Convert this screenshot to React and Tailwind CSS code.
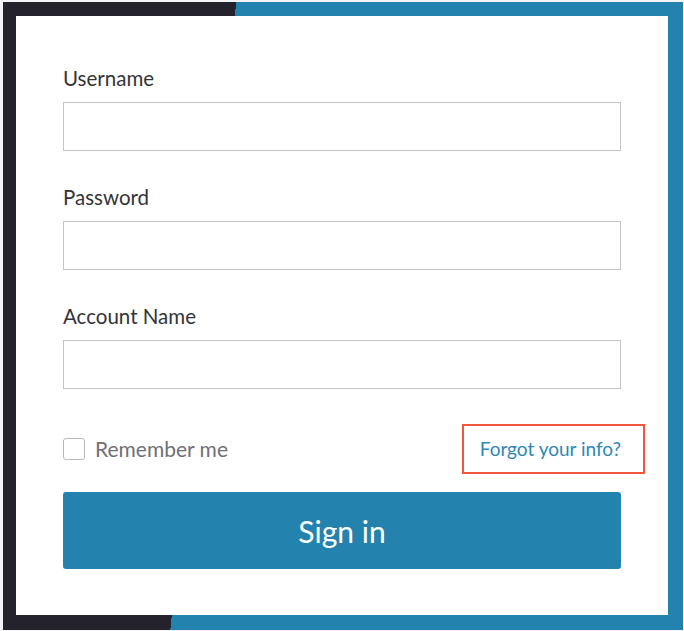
import React from "react";

export default function App() {
  const font = { fontFamily: "Lato, 'Noto Sans', sans-serif" };
  return (
    <div className="w-[684px] h-[631px] bg-[#f4f4f6] pt-[2px] pl-[3px] pr-[1px] pb-[1px]" style={font}>
      <div className="w-full h-full pt-[14px] pl-[13px] pr-[15px] pb-[15px] bg-[linear-gradient(96deg,#24222b_232px,#2483ae_232px)]">
        <div className="w-full h-full bg-white pt-[50px] px-[47px]">
          <div className="flex flex-col">
            <label className="text-[20.5px] leading-[24px] text-[#343438]">Username</label>
            <input className="mt-[12px] h-[49px] w-full border border-[#c4c3ca] bg-white outline-none" />
            <label className="mt-[34px] text-[20.5px] leading-[24px] text-[#343438]">Password</label>
            <input type="password" className="mt-[12px] h-[49px] w-full border border-[#c4c3ca] bg-white outline-none" />
            <label className="mt-[34px] text-[20.5px] leading-[24px] text-[#343438]">Account Name</label>
            <input className="mt-[12px] h-[49px] w-full border border-[#c4c3ca] bg-white outline-none" />
          </div>
          <div className="mt-[35px] h-[50px] flex items-center justify-between">
            <div className="flex items-center gap-[10px]">
              <span className="w-[22px] h-[22px] rounded-[3px] border-[1.5px] border-[#b9b8bf] bg-white"></span>
              <span className="text-[21px] leading-[24px] text-[#707076]">Remember me</span>
            </div>
            <a className="relative text-[19px] leading-[24px] text-[#2e88b5]">
              Forgot your info?
              <span className="absolute -left-[18px] -right-[24px] -top-[13px] -bottom-[13px] border-2 border-[#f0573b]"></span>
            </a>
          </div>
          <button className="mt-[18px] w-full h-[77px] rounded-[3px] bg-[#2483ae] text-white text-[30px] leading-none">
            Sign in
          </button>
        </div>
      </div>
    </div>
  );
}
